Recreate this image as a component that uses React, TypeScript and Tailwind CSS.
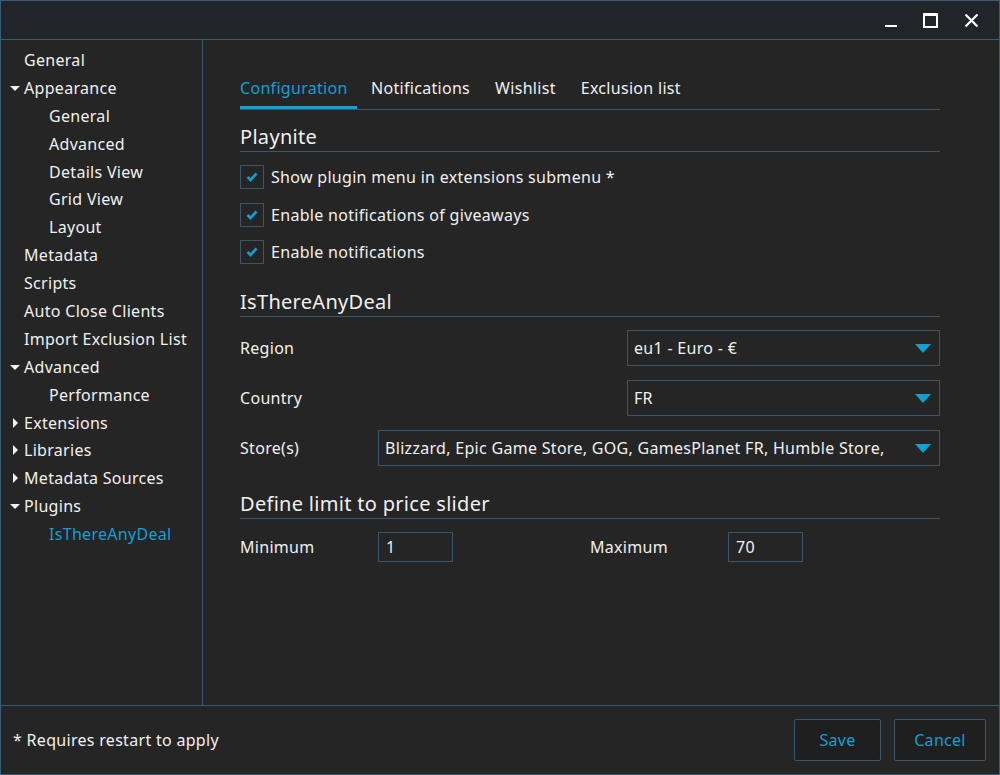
import React from "react";

const ACC = "text-[#129fd1]";

function Caret({ open }: { open: boolean }) {
  return open ? (
    <svg width="10" height="10" viewBox="0 0 10 10" className="shrink-0">
      <path d="M0 3 L10 3 L5 8 Z" fill="#f0f0f0" />
    </svg>
  ) : (
    <svg width="10" height="10" viewBox="0 0 10 10" className="shrink-0">
      <path d="M3 0 L8 5 L3 10 Z" fill="#f0f0f0" />
    </svg>
  );
}

type Item = { label: string; level: number; caret?: "open" | "closed"; active?: boolean };

const items: Item[] = [
  { label: "General", level: 0 },
  { label: "Appearance", level: 0, caret: "open" },
  { label: "General", level: 1 },
  { label: "Advanced", level: 1 },
  { label: "Details View", level: 1 },
  { label: "Grid View", level: 1 },
  { label: "Layout", level: 1 },
  { label: "Metadata", level: 0 },
  { label: "Scripts", level: 0 },
  { label: "Auto Close Clients", level: 0 },
  { label: "Import Exclusion List", level: 0 },
  { label: "Advanced", level: 0, caret: "open" },
  { label: "Performance", level: 1 },
  { label: "Extensions", level: 0, caret: "closed" },
  { label: "Libraries", level: 0, caret: "closed" },
  { label: "Metadata Sources", level: 0, caret: "closed" },
  { label: "Plugins", level: 0, caret: "open" },
  { label: "IsThereAnyDeal", level: 1, active: true },
];

function Check({ label }: { label: string }) {
  return (
    <div className="flex items-center h-[24px]">
      <div className="w-[24px] h-[24px] border border-[#3b5669] flex items-center justify-center">
        <svg width="12" height="10" viewBox="0 0 12 10">
          <path d="M1.5 5 L4.5 8 L10.5 1.5" stroke="#129fd1" strokeWidth="2.6" fill="none" />
        </svg>
      </div>
      <span className="ml-[7px]">{label}</span>
    </div>
  );
}

function Header({ title }: { title: string }) {
  return (
    <div className="border-b border-[#3b5669] h-[27px] flex items-end">
      <span className="text-[20px] leading-[26px] mb-[1px]">{title}</span>
    </div>
  );
}

function Select({ value, className }: { value: string; className: string }) {
  return (
    <div className={"h-[36px] border border-[#3b5669] flex items-center pl-[6px] pr-[8px] " + className}>
      <span className="flex-1 whitespace-nowrap overflow-hidden">{value}</span>
      <svg width="16" height="9" viewBox="0 0 16 9" className="shrink-0 ml-2">
        <path d="M0 0 L16 0 L8 9 Z" fill="#129fd1" />
      </svg>
    </div>
  );
}

export default function App() {
  return (
    <div
      className="w-[1000px] h-[775px] bg-[#252525] text-[#f0f0f0] border border-[#3a5a78] flex flex-col text-[16px] tracking-[0.3px] overflow-hidden"
      style={{ fontFamily: '"Noto Sans", "DejaVu Sans", sans-serif' }}
    >
      {/* Title bar */}
      <div className="h-[39px] shrink-0 bg-[#21252a] border-b border-[#3a5a72] flex items-center justify-end pr-[20px]">
        <div className="flex items-center gap-[26px]">
          <div className="w-[12px] h-[16px] flex items-end pb-[1px]">
            <div className="w-[12px] h-[2px] bg-white" />
          </div>
          <div className="w-[15px] h-[15px] border-2 border-white border-t-[3px]" />
          <svg width="15" height="15" viewBox="0 0 15 15">
            <path d="M1.5 1.5 L13.5 13.5 M13.5 1.5 L1.5 13.5" stroke="white" strokeWidth="2.2" />
          </svg>
        </div>
      </div>

      <div className="flex flex-1 min-h-0">
        {/* Sidebar */}
        <div className="w-[202px] shrink-0 border-r border-[#3a5a72] pt-[6px]">
          {items.map((it, i) => (
            <div key={i} className="h-[27.9px] flex items-center">
              <div className={it.level === 0 ? "w-[23px] pl-[9px]" : "w-[48px]"}>
                {it.caret && <Caret open={it.caret === "open"} />}
              </div>
              <span className={it.active ? ACC : ""}>{it.label}</span>
            </div>
          ))}
        </div>

        {/* Content */}
        <div className="flex-1 pl-[37px] pr-[59px] pt-[35px]">
          <div className="flex border-b border-[#3b5669] h-[35px] text-[16px]">
            <div className={"w-[117px] flex flex-col " + ACC}>
              <span className="h-[32px] leading-[26px]">Configuration</span>
              <div className="h-[3px] bg-[#129fd1] w-[117px]" />
            </div>
            <span className="ml-[14px] leading-[26px]">Notifications</span>
            <span className="ml-[25px] leading-[26px]">Wishlist</span>
            <span className="ml-[25px] leading-[26px]">Exclusion list</span>
          </div>

          <div className="mt-[15px]">
            <Header title="Playnite" />
          </div>
          <div className="mt-[13px] flex flex-col gap-[13.5px]">
            <Check label="Show plugin menu in extensions submenu *" />
            <Check label="Enable notifications of giveaways" />
            <Check label="Enable notifications" />
          </div>

          <div className="mt-[26px]">
            <Header title="IsThereAnyDeal" />
          </div>

          <div className="mt-[13px] flex items-center">
            <span className="flex-1">Region</span>
            <Select value="eu1 - Euro - €" className="w-[313px]" />
          </div>
          <div className="mt-[14px] flex items-center">
            <span className="flex-1">Country</span>
            <Select value="FR" className="w-[313px]" />
          </div>
          <div className="mt-[14px] flex items-center">
            <span className="w-[138px]">Store(s)</span>
            <Select
              value="Blizzard, Epic Game Store, GOG, GamesPlanet FR, Humble Store,"
              className="flex-1"
            />
          </div>

          <div className="mt-[26px]">
            <Header title="Define limit to price slider" />
          </div>

          <div className="mt-[13px] flex items-center">
            <span className="w-[138px]">Minimum</span>
            <div className="w-[75px] h-[30px] border border-[#3b5669] flex items-center pl-[7px]">1</div>
            <span className="ml-[137px] w-[138px]">Maximum</span>
            <div className="w-[75px] h-[30px] border border-[#3b5669] flex items-center pl-[7px]">70</div>
          </div>
        </div>
      </div>

      {/* Footer */}
      <div className="h-[69px] shrink-0 border-t border-[#3a5a72] flex items-center pl-[12px] pr-[13px]">
        <span className="flex-1">* Requires restart to apply</span>
        <button className={"w-[87px] h-[42px] border border-[#3b5669] bg-[#1f1f1f] rounded-[2px] " + ACC}>Save</button>
        <button className={"ml-[13px] w-[92px] h-[42px] border border-[#3b5669] bg-[#1f1f1f] rounded-[2px] " + ACC}>Cancel</button>
      </div>
    </div>
  );
}
